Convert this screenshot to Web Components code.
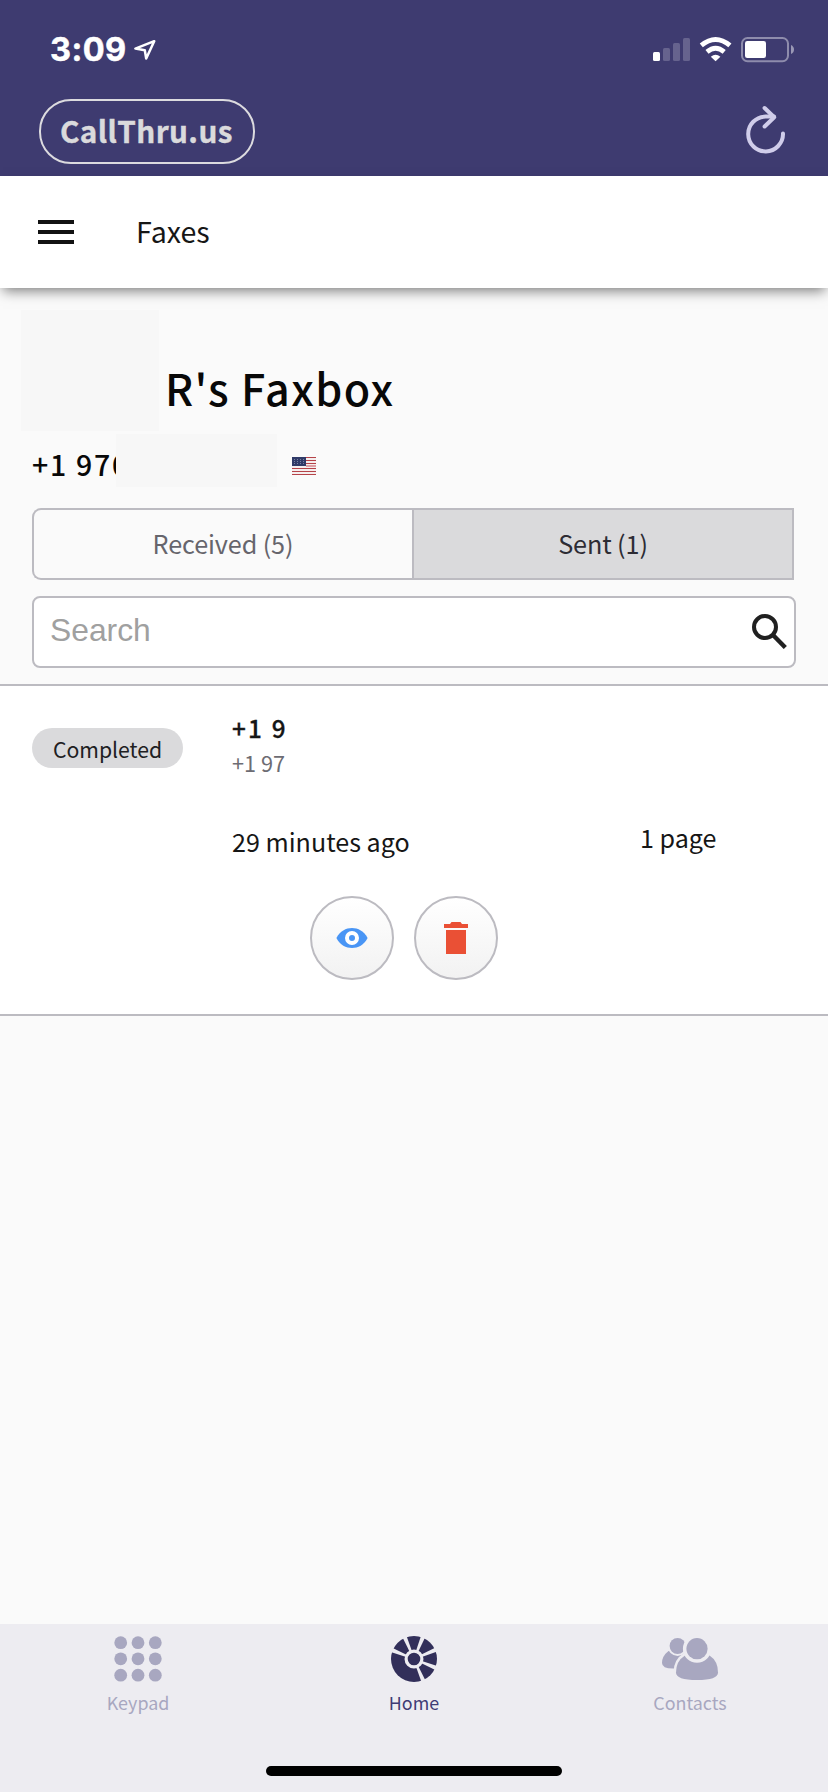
<!DOCTYPE html>
<html lang="en"><head><meta charset="utf-8"><title>Faxes</title>
<style>
html,body{margin:0;padding:0}
body{width:828px;height:1792px;overflow:hidden;background:#fafafa;font-family:"Noto Sans CJK SC","Open Sans",sans-serif;color:#161616}
</style></head><body>
<fax-app></fax-app>
<script>
const define=(name,html)=>customElements.define(name,class extends HTMLElement{
  constructor(){super();const t=document.createElement('template');
    t.innerHTML='<style>*{box-sizing:border-box}svg{display:block;flex:none}</style>'+html;
    this.attachShadow({mode:'open'}).append(t.content.cloneNode(true));}
});

define('status-bar',`<style>
:host{display:flex;height:96px;align-items:flex-start;padding:30px 33px 0 50px;color:#fff}
b{font:700 32.500px/40px Inter,sans-serif;letter-spacing:.4px;width:84px;white-space:nowrap;-webkit-text-stroke:.5px}
.r{margin-left:auto}</style>
<b>3:09</b>
<svg width="24" height="36" viewBox="134 30 24 36"><path d="M154.2 41.2 135.4 48.6 144.8 50.2 146.2 58.6Z" fill="none" stroke="#fff" stroke-width="2.5" stroke-linejoin="round"/></svg>
<svg class="r" width="143" height="36" viewBox="652 30 143 36">
<rect x="653" y="52" width="7" height="9" rx="1.5" fill="#fff"/><g fill="#66638e"><rect x="663" y="48" width="7" height="13" rx="1.5"/><rect x="673" y="43" width="7" height="18" rx="1.5"/><rect x="683" y="38" width="7" height="23" rx="1.5"/></g>
<g fill="none" stroke="#fff" stroke-width="4.8"><path d="M701.3 45.4Q715.6 33.4 729.9 45.4"/><path d="M707 51.8Q715.6 44.6 724.2 51.8"/></g><path d="M710.8 56.8Q715.6 52.6 720.4 56.8L715.6 61.2Z" fill="#fff"/>
<rect x="742" y="38" width="46" height="23.2" rx="5.5" fill="none" stroke="#8e8cac" stroke-width="2"/><rect x="745" y="41" width="21" height="17" rx="2.3" fill="#fff"/><path d="M791 45v9q3-1.5 3-4.500t-3-4.500z" fill="#9a98b5"/></svg>`);

define('brand-bar',`<style>
:host{display:flex;height:80px;justify-content:space-between;padding:3px 40px 0 39px}
.p{width:216px;height:65px;border:2px solid #dcdbdf;border-radius:32px;color:#dadadc;font-weight:700;font-size:29.700px;line-height:60px;padding-left:19px;white-space:nowrap;letter-spacing:.4px;-webkit-text-stroke:.4px}
svg{margin-top:3px}</style>
<div class="p"><slot></slot></div>
<svg width="44" height="56" viewBox="744 102 44 56"><g fill="none" stroke="#d0cdea" stroke-width="4" stroke-linecap="round" stroke-linejoin="round"><path d="M783 133.500A17.400 17.400 0 1 1 765.600 116.600H774"/><path d="M764.600 108 774.200 117.200 764.600 126.500"/></g></svg>`);

define('app-bar',`<style>
:host{display:flex;height:112px;background:#fff;align-items:center;padding-left:38px;box-shadow:0 6px 12px -3px rgba(0,0,0,.5);position:relative;font-size:28.600px}
span{margin-left:62px;line-height:40px;margin-top:-2px}</style>
<svg width="36" height="24"><path d="M0 2H36M0 12H36M0 22H36" stroke="#121212" stroke-width="4"/></svg><span><slot></slot></span>`);

define('fax-heading',`<style>
:host{display:block;padding:22px 0 0 21px;height:220px;color:#080808;font-weight:500}
.a,.b{display:flex}.m{background:#f7f7f7;flex:none;position:relative}
.a .m{width:138px;height:121px}.b .m{width:160.500px;height:53px}
h1{font:inherit;font-size:43px;line-height:60px;margin:47px 0 0 6px;letter-spacing:1.4px;white-space:nowrap}
.a{height:124px}.b{padding-left:11px}
.n{width:84px;white-space:nowrap;font-size:28.500px;line-height:60px;letter-spacing:1.700px;height:53px}
.b svg{margin:23px 0 0 15.500px}</style>
<div class="a"><div class="m"></div><h1>R's Faxbox</h1></div>
<div class="b"><div class="n">+1 970</div><div class="m"></div>
<svg width="24" height="18"><path fill="#f5eeee" d="M0 0h24v18H0z"/><path d="M0 .5H24M0 3.500H24M0 6.500H24M0 11.500H24M0 14.500H24M0 17.500H24" stroke="#b54349"/><path d="M14 9H24" stroke="#dda0a5" stroke-width="2"/><path fill="#303b68" d="M0 0h14v9H0z"/><path d="M2 2.500H13M2 4.500H13M2 6.500H13" stroke="#8b93b1" stroke-width=".8" stroke-dasharray="1 2"/></svg></div>`);

define('fax-tabs',`<style>
:host{display:flex;margin:0 34px 0 32px;height:72px;font-size:25.200px;letter-spacing:-.1px;line-height:67px;text-align:center;color:#66656c}
div{border:2px solid #bcbbc1}.l{width:380px;border-right:0;border-radius:9px 0 0 9px}.r{flex:1;background:#dadadc;color:#2d2c34}</style>
<div class="l"><slot name="received"></slot></div><div class="r"><slot name="sent"></slot></div>`);

define('fax-search',`<style>
:host{display:flex;margin:16px 32px;height:72px;border:2px solid #bcbbc1;border-radius:8px;background:#fff;align-items:center;justify-content:space-between;padding:0 7px 0 16px;box-sizing:border-box;font:31.800px/40px "Liberation Sans",sans-serif;color:#a0a0a0}
span{margin-top:-4px}svg{margin-top:-2px}</style>
<span><slot></slot></span><svg width="36" height="36" viewBox="751 613 36 36"><g fill="none" stroke="#202020" stroke-width="4"><circle cx="765" cy="627" r="11"/><path d="M773.500 635.500 785.300 647.500" stroke-width="4.400"/></g></svg>`);

define('round-button',`<style>:host{display:flex;width:84px;height:84px;box-sizing:border-box;border:2px solid #bcbbc1;border-radius:50%;background:linear-gradient(#fff,#f2f2f2);align-items:center;justify-content:center}</style><slot></slot>`);

define('fax-item',`<style>
:host{display:block;height:332px;box-sizing:border-box;border:solid #bcbbc1;border-width:2px 0;background:#fff;padding:42px 0 0 32px;white-space:nowrap}
.t{display:grid;grid-template-columns:200px 408px 1fr;height:128px}
.c{width:151px;height:40px;border-radius:20px;background:#dadadc;text-align:center;font-size:21.200px;line-height:42px;color:#202022}
.n{font-size:24.300px;font-weight:500;-webkit-text-stroke:.3px;line-height:36px;margin-top:-18px;letter-spacing:2.200px}
.s{font-size:21.700px;line-height:34px;color:#6d6c73}
.w,.p{font-size:25.100px;line-height:36px}.w{margin-top:43px}.p{margin-top:91px}
.b{display:flex;gap:20px;padding:40px 0 0 278px}</style>
<div class="t"><div class="c">Completed</div><div><div class="n">+1 9</div><div class="s">+1 97</div><div class="w">29 minutes ago</div></div><div class="p">1 page</div></div>
<div class="b"><round-button><svg width="32" height="22" viewBox="0 0 32 22"><path fill="#4995f5" d="M.4 11C4 4 10 1 16 1s12 3 15.600 10C28 18 22 21 16 21S4 18 .4 11Z"/><circle cx="16" cy="11" r="5" fill="#4995f5" stroke="#fff" stroke-width="4"/></svg></round-button>
<round-button><svg width="24" height="32" viewBox="0 0 24 32"><path fill="#ea5035" d="M0 2H6L7.500 0H16.500L18 2H24V6H0ZM2 8H22V32H2Z"/></svg></round-button></div>`);

define('tab-item',`<style>:host{display:flex;flex-direction:column;align-items:center;flex:1;font-size:17.900px;line-height:30px}div{height:48px;margin-bottom:4px}</style><div><slot name="icon"></slot></div><slot></slot>`);

define('tab-bar',`<style>
:host{display:flex;height:168px;background:#edecf1;padding-top:11px;box-sizing:border-box;color:#a8a7c0;position:relative}
.h{color:#3f3c75}i{position:absolute;left:266px;top:142px;width:296px;height:10px;border-radius:5px;background:#000}</style>
<tab-item><svg slot="icon" width="48" height="48" viewBox="114 1635 48 48"><g fill="#a8a7c0">${[1642.7,1658.8,1675.2].map(y=>[120.7,138,155.3].map(x=>`<circle cx="${x}" cy="${y}" r="6.400"/>`).join('')).join('')}</g></svg>Keypad</tab-item>
<tab-item class="h"><svg slot="icon" width="48" height="48" viewBox="-24 -24 48 48"><circle r="23" fill="#322f5a"/><g fill="#edecf1">${[22,67,202,247,292,337].map(a=>`<path d="M8-1.200 25-2.200V2.200L8 1.200Z" transform="rotate(${a})"/>`).join('')}</g><circle r="7.900" fill="#322f5a" stroke="#edecf1" stroke-width="3.200"/></svg>Home</tab-item>
<tab-item><svg slot="icon" width="58" height="48" viewBox="661 1635 58 48"><g fill="#a8a7c0" stroke="#edecf1" stroke-width="5" paint-order="stroke"><path d="M668.500 1651Q662 1656 662 1663 662 1668.500 673 1668.500H684V1652Z"/><circle cx="677.600" cy="1646" r="8" stroke-width="4"/><path d="M685 1655.500Q676 1661 676 1672.500 676 1680 697 1680T718 1672.500Q718 1661 709.500 1655.500Z"/><circle cx="697" cy="1648.700" r="10.600" stroke-width="7"/></g></svg>Contacts</tab-item><i></i>`);

define('fax-app',`<style>:host{display:flex;flex-direction:column;width:828px;height:1792px}header{background:#3e3b70}tab-bar{margin-top:auto}</style>
<header><status-bar></status-bar><brand-bar>CallThru.us</brand-bar></header>
<app-bar>Faxes</app-bar><fax-heading></fax-heading>
<fax-tabs><span slot="received">Received (5)</span><span slot="sent">Sent (1)</span></fax-tabs>
<fax-search>Search</fax-search><fax-item></fax-item><tab-bar></tab-bar>`);
</script></body></html>
